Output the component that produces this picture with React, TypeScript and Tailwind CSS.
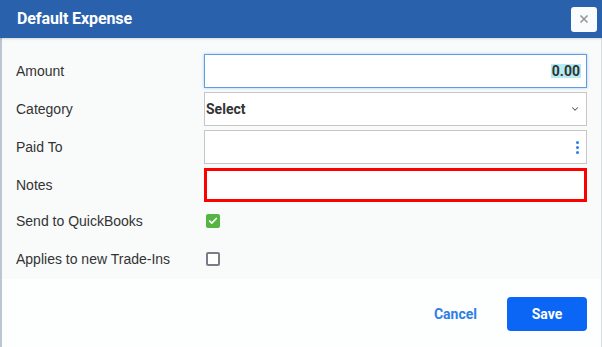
import { X, ChevronDown, Check } from 'lucide-react';

const rows = ['Amount', 'Category', 'Paid To', 'Notes'];

export default function App() {
  return (
    <div className="w-[602px] h-[347px] flex flex-col bg-white font-['Liberation_Sans',Arial,sans-serif] overflow-hidden">
      {/* Header */}
      <div className="h-[38px] shrink-0 bg-[#2a61ad] flex items-center justify-between pl-[17px] pr-[5px] shadow-[0_1px_2px_rgba(0,0,0,0.15)] relative z-10">
        <h1 className="text-white text-[16px] font-bold font-['Roboto',sans-serif] tracking-[-0.1px]">Default Expense</h1>
        <button className="w-[26px] h-[25px] rounded-[3px] bg-[#fafbfc] flex items-center justify-center">
          <X className="w-[12px] h-[12px] text-[#9a9a9a]" strokeWidth={3.5} />
        </button>
      </div>

      {/* Body */}
      <div className="flex-1 flex flex-col border-l-2 border-l-[#bcc6d0] border-r border-r-[#d8dcdf] bg-[#f9fbfb]">
        <div className="flex flex-col gap-1 pt-4 pl-[14px] pr-[14px]">
          {/* Amount */}
          <div className="flex items-center h-[34px]">
            <label className="w-[188px] text-[14px] text-[#333]">{rows[0]}</label>
            <div className="flex-1 h-[34px] bg-white border border-[#5e9de2] shadow-[0_0_3px_rgba(80,150,230,0.45)] flex items-center justify-end pr-[5px]">
              <span className="bg-[#b3ecf2] text-[14px] font-bold text-[#333] font-['Roboto',sans-serif] leading-[14px] px-px">0.00</span>
            </div>
          </div>
          {/* Category */}
          <div className="flex items-center h-[34px]">
            <label className="w-[188px] text-[14px] text-[#333]">{rows[1]}</label>
            <div className="flex-1 h-[34px] bg-white border border-[#c6c6c6] flex items-center justify-between pl-px pr-[6px]">
              <span className="text-[14px] font-bold text-[#333] font-['Roboto',sans-serif]">Select</span>
              <ChevronDown className="w-[10px] h-[10px] text-[#555]" strokeWidth={2.5} />
            </div>
          </div>
          {/* Paid To */}
          <div className="flex items-center h-[34px]">
            <label className="w-[188px] text-[14px] text-[#333]">{rows[2]}</label>
            <div className="flex-1 h-[34px] bg-white border border-[#c6c6c6] flex items-center justify-end pr-[7px]">
              <div className="flex flex-col gap-[2px]">
                <span className="w-[3px] h-[3px] rounded-full bg-[#2b7de3]" />
                <span className="w-[3px] h-[3px] rounded-full bg-[#2b7de3]" />
                <span className="w-[3px] h-[3px] rounded-full bg-[#2b7de3]" />
              </div>
            </div>
          </div>
          {/* Notes */}
          <div className="flex items-center h-[34px]">
            <label className="w-[188px] text-[14px] text-[#333]">{rows[3]}</label>
            <div className="flex-1 h-[34px] bg-white border-[3px] border-[#ff0000]" />
          </div>
          {/* Send to QuickBooks */}
          <div className="flex items-center h-[34px] mt-[-2px]">
            <label className="w-[190px] text-[14px] text-[#333]">Send to QuickBooks</label>
            <span className="w-[14px] h-[14px] rounded-[2px] bg-[#56b443] flex items-center justify-center">
              <Check className="w-[10px] h-[10px] text-white" strokeWidth={4} />
            </span>
          </div>
          {/* Applies to new Trade-Ins */}
          <div className="flex items-center h-[34px]">
            <label className="w-[190px] text-[14px] text-[#333]">Applies to new Trade-Ins</label>
            <span className="w-[14px] h-[14px] rounded-[2px] border-2 border-[#7b7b89] bg-white" />
          </div>
        </div>

        {/* Footer */}
        <div className="mt-auto bg-[#fdfefe] flex items-center justify-end gap-[30px] pr-[14px] pb-[16px] pt-[18px]">
          <button className="text-[14px] font-bold text-[#2f7fe6] font-['Roboto',sans-serif]">Cancel</button>
          <button className="w-[80px] h-[34px] rounded-[4px] bg-[#0b66f5] text-white text-[14px] font-bold font-['Roboto',sans-serif]">Save</button>
        </div>
      </div>
    </div>
  );
}
